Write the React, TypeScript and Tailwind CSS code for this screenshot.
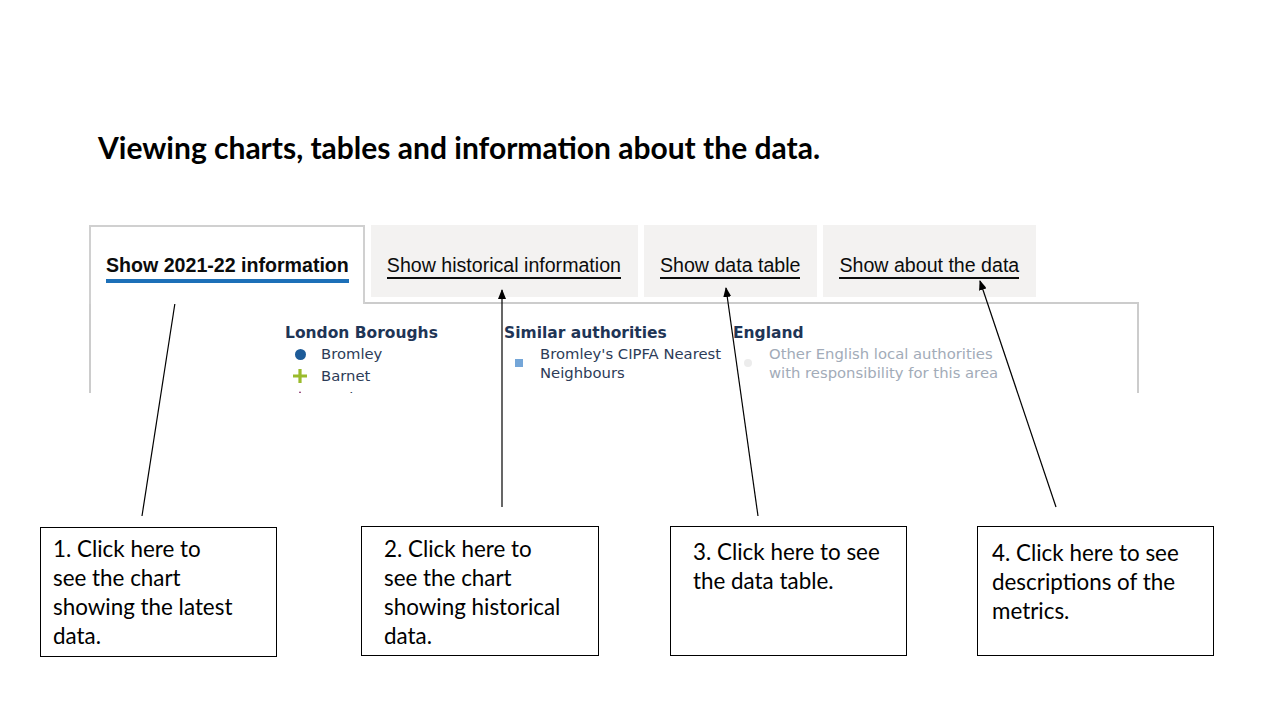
const tabs = ["Show historical information", "Show data table", "Show about the data"];

const callouts = [
  { lines: ["1. Click here to", "see the chart", "showing the latest", "data."], cls: "mt-[1px] pl-[12px] pt-[6px]" },
  { lines: ["2. Click here to", "see the chart", "showing historical", "data."], cls: "pl-[22px] pt-[7px]" },
  { lines: ["3. Click here to see", "the data table."], cls: "pl-[22px] pt-[10px]" },
  { lines: ["4. Click here to see", "descriptions of the", "metrics."], cls: "pl-[14px] pt-[11px]" },
];

// [tailX, tailY, tipX, tipY]
const arrows = [
  [142, 516, 177, 290],
  [502, 507, 502, 290],
  [758, 516, 726, 288],
  [1056, 507, 980, 281],
];

function Marker({ kind }: { kind: string }) {
  if (kind === "circle") return <span className="block w-[11px] h-[11px] rounded-full bg-[#1d5b98]" />;
  if (kind === "plus")
    return (
      <svg width="14" height="14" viewBox="0 0 14 14">
        <path d="M7 0v14M0 7h14" stroke="#9abb2c" strokeWidth="3.2" />
      </svg>
    );
  if (kind === "tri")
    return (
      <svg width="14" height="14" viewBox="0 0 14 14">
        <path d="M7 0L14 14H0Z" fill="#7b1d5d" />
      </svg>
    );
  if (kind === "square") return <span className="block w-[8px] h-[8px] bg-[#74a6d8]" />;
  return <span className="block w-[8px] h-[8px] rounded-full bg-[#ececec]" />;
}

function LegendItem({ kind, children, grey, tight }: { kind: string; children: React.ReactNode; grey?: boolean; tight?: boolean }) {
  return (
    <div className="flex items-center">
      <div className="w-[30px] flex justify-center shrink-0">
        <Marker kind={kind} />
      </div>
      <div className={`ml-[6px] whitespace-nowrap ${tight ? "leading-[19px] py-[1px]" : "leading-[22px]"} ${grey ? "text-[#a2abb8]" : "text-[#2c3b57]"}`}>
        {children}
      </div>
    </div>
  );
}

export default function App() {
  return (
    <div className="relative w-[1280px] h-[720px] overflow-hidden bg-white">
      <div className="h-[225px] pt-[129px] pl-[98px]">
        <h1 className="font-['Lato',sans-serif] font-bold text-[30px] leading-[36px] text-black">
          Viewing charts, tables and information about the data.
        </h1>
      </div>

      {/* tabbed panel screenshot */}
      <div className="ml-[89px] w-[1050px] h-[168px] overflow-hidden flex flex-col font-['Liberation_Sans',Arial,sans-serif] text-[19.6px] text-[#0b0c0c]">
        <div className="flex items-start">
          <div className="relative z-10 h-[79px] -mb-[2px] bg-white border-l-2 border-t-2 border-r-2 border-[#d0d0d0] pl-[15px] pr-[14px] pt-[24px]">
            <span className="inline-block font-bold leading-[24px] pb-[2px] border-b-4 border-[#1d70b8] whitespace-nowrap">
              Show 2021-22 information
            </span>
          </div>
          {tabs.map((t) => (
            <div key={t} className="ml-[6px] h-[72px] bg-[#f3f2f1] pl-[16px] pr-[17px] pt-[26px]">
              <span className="inline-block leading-[24px] border-b-2 border-[#0b0c0c] whitespace-nowrap">{t}</span>
            </div>
          ))}
        </div>
        <div className="flex-1 border-l-2 border-t-2 border-r-2 border-[#cccccc] w-[1050px] pl-[194px] pt-[19px] font-['DejaVu_Sans',Verdana,sans-serif] text-[14.8px]">
          <div className="flex">
            <div className="w-[219px]">
              <div className="font-bold text-[15.5px] leading-[20px] text-[#1f3556]">London Boroughs</div>
              <LegendItem kind="circle">Bromley</LegendItem>
              <LegendItem kind="plus">Barnet</LegendItem>
              <LegendItem kind="tri">Hackney</LegendItem>
            </div>
            <div className="w-[229px]">
              <div className="font-bold text-[15.5px] leading-[20px] text-[#1f3556]">Similar authorities</div>
              <LegendItem kind="square" tight>
                Bromley's CIPFA Nearest
                <br />
                Neighbours
              </LegendItem>
            </div>
            <div>
              <div className="font-bold text-[15.5px] leading-[20px] text-[#1f3556]">England</div>
              <LegendItem kind="dot" grey tight>
                Other English local authorities
                <br />
                with responsibility for this area
              </LegendItem>
            </div>
          </div>
        </div>
      </div>

      {/* callout boxes */}
      <div className="mt-[133px] ml-[40px] flex items-start font-['Lato',sans-serif] text-[22.4px] leading-[29px] text-black">
        {callouts.map((c, i) => (
          <div
            key={i}
            className={`h-[130px] border border-black ${c.cls} ${
              ["w-[237px]", "ml-[84px] w-[238px]", "ml-[71px] w-[237px]", "ml-[70px] w-[237px]"][i]
            }`}
          >
            {c.lines.map((l) => (
              <div key={l} className="whitespace-nowrap">{l}</div>
            ))}
          </div>
        ))}
      </div>

      {/* arrows */}
      <svg className="absolute inset-0 pointer-events-none" width="1280" height="720">
        <defs>
          <marker id="head" markerWidth="10" markerHeight="8" refX="9" refY="4" orient="auto" markerUnits="userSpaceOnUse">
            <path d="M0 0L10 4L0 8Z" fill="#000" />
          </marker>
        </defs>
        {arrows.map(([x1, y1, x2, y2], i) => (
          <line key={i} x1={x1} y1={y1} x2={x2} y2={y2} stroke="#000" strokeWidth="1.2" markerEnd="url(#head)" />
        ))}
      </svg>
    </div>
  );
}
